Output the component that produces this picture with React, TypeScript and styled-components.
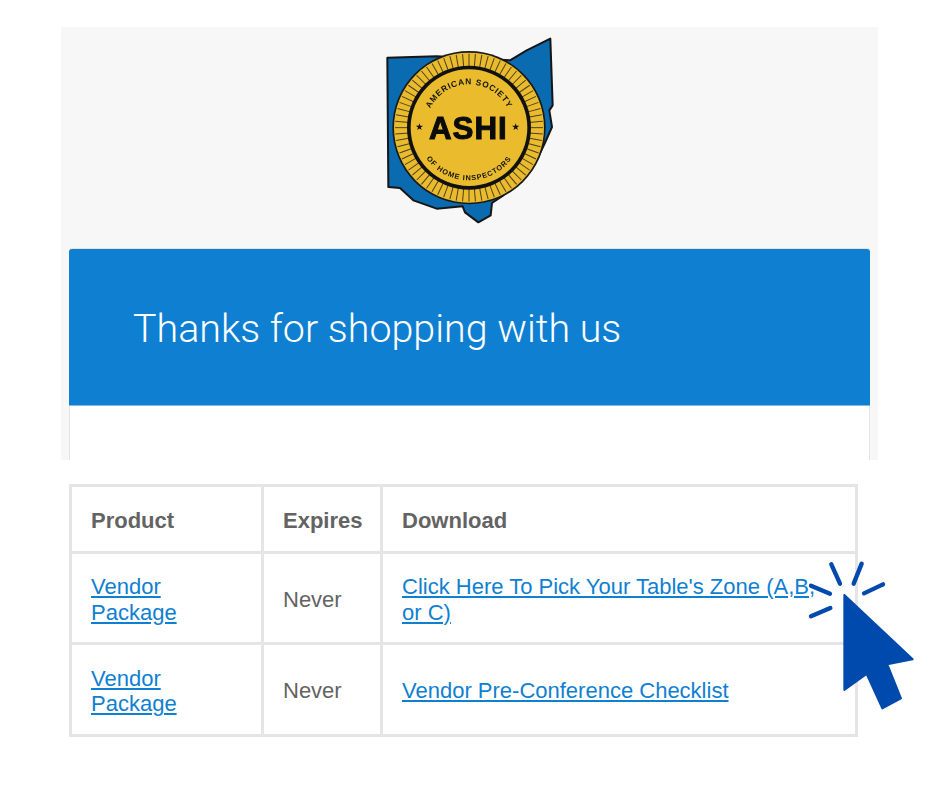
import React from "react";
import styled, { createGlobalStyle } from "styled-components";

const Global = createGlobalStyle`
  html, body { margin: 0; padding: 0; background: #fff; }
  body { font-family: "Liberation Sans", Arial, sans-serif; }
`;

const Page = styled.div`
  position: relative;
  width: 940px;
  height: 788px;
  padding-top: 27px;
  box-sizing: border-box;
  overflow: hidden;
`;

const TopPanel = styled.section`
  width: 817px;
  height: 433px;
  margin-left: 61px;
  padding: 0 8px;
  box-sizing: border-box;
  background: #f7f7f7;
  display: flex;
  flex-direction: column;
`;

const LogoRow = styled.div`
  height: 222px;
  display: flex;
  justify-content: center;
  align-items: flex-start;
`;

const LogoArt = styled.svg`
  filter: blur(0.45px);
`;

const Card = styled.div`
  flex: 1;
  background: #fff;
  border-radius: 3px 3px 0 0;
  border: solid #e4e4e4;
  border-width: 0 1px;
  box-shadow: 0 -1px 0 #e2e2e2;
  display: flex;
  flex-direction: column;
`;

const Banner = styled.div`
  height: 157px;
  margin: 0 -1px;
  background: #0f7fd2;
  border-radius: 3px 3px 0 0;
  border-bottom: 1px solid #7dbbe8;
  box-sizing: border-box;
  display: flex;
  align-items: center;
  padding: 4px 0 0 64px;
`;

const Title = styled.h1`
  margin: 0;
  font-family: Roboto, "Liberation Sans", sans-serif;
  font-weight: 300;
  font-size: 39.4px;
  line-height: 46px;
  color: #fff;
`;

const OrderTable = styled.table`
  margin: 24px 0 0 69px;
  width: 789px;
  table-layout: fixed;
  border-collapse: collapse;
  font-size: 22px;
  line-height: 25.5px;
  color: #636363;
`;

const HeadCell = styled.th`
  border: 3px solid #e5e5e5;
  padding: 3px 19px 0;
  height: 61px;
  text-align: left;
  font-weight: 700;
`;

const Cell = styled.td`
  border: 3px solid #e5e5e5;
  padding: 3px 19px 0;
  height: ${(p: { $h: number }) => p.$h}px;
  text-align: left;
  vertical-align: middle;
`;

const ProductLink = styled.a`
  color: #0f7fd2;
  text-decoration: underline;
`;

const Pointer = styled.svg`
  position: absolute;
  left: 790px;
  top: 550px;
`;

const ticks = Array.from({ length: 72 }, (_, i) => (i * 360) / 72);

const Logo = () => (
  <LogoArt width="200" height="205" viewBox="0 0 600 615" role="img" aria-label="ASHI Ohio logo">
    <defs>
      <path id="topArc" d="M 167 302 A 130 130 0 0 1 427 302" />
      <path id="bottomArc" d="M 139 302 A 158 158 0 0 0 455 302" />
    </defs>
    <path
      d="M52 92 L200 88 L420 100 L470 70 L541 35 L548 235 L538 250 L546 300 L526 345 L500 400 L400 505 L366 528 L362 565 L325 586 L285 556 L278 538 L200 545 L130 520 L90 483 L55 480 Z"
      fill="#0a6bb0"
      stroke="#161616"
      strokeWidth="6"
      strokeLinejoin="round"
    />
    <circle cx="297" cy="302" r="230" fill="#1a1a1a" />
    <circle cx="297" cy="302" r="225" fill="#e9bb2d" />
    {ticks.map((a) => (
      <line
        key={a}
        x1="297"
        y1="80"
        x2="297"
        y2="122"
        stroke="#4a4020"
        strokeWidth="3"
        transform={`rotate(${a} 297 302)`}
      />
    ))}
    <circle cx="297" cy="302" r="186" fill="#111" />
    <circle cx="297" cy="302" r="175" fill="#e9bb2d" />
    <text fontFamily="'Liberation Sans', sans-serif" fontWeight="700" fontSize="25" letterSpacing="2.4" fill="#111">
      <textPath href="#topArc" startOffset="50%" textAnchor="middle">AMERICAN SOCIETY</textPath>
    </text>
    <text fontFamily="'Liberation Sans', sans-serif" fontWeight="700" fontSize="22" letterSpacing="2.6" fill="#111">
      <textPath href="#bottomArc" startOffset="50%" textAnchor="middle">OF HOME INSPECTORS</textPath>
    </text>
    <text x="295" y="335" textAnchor="middle" fontFamily="'Liberation Sans', sans-serif" fontWeight="700" fontSize="94" letterSpacing="3" stroke="#0b0b0b" strokeWidth="3" fill="#0b0b0b">ASHI</text>
    <text x="148" y="310" textAnchor="middle" fontFamily="'DejaVu Sans', sans-serif" fontSize="28" fill="#111">★</text>
    <text x="437" y="310" textAnchor="middle" fontFamily="'DejaVu Sans', sans-serif" fontSize="28" fill="#111">★</text>
  </LogoArt>
);

const CursorIcon = () => (
  <Pointer width="140" height="170" viewBox="0 0 420 510" aria-hidden="true">
    <path
      d="M163 135 L368 328 L292 343 L333 445 L277 475 L230 372 L163 420 Z"
      fill="#0049ad"
      stroke="#0049ad"
      strokeWidth="6"
      strokeLinejoin="round"
    />
    <g stroke="#0049ad" strokeWidth="13" strokeLinecap="round">
      <line x1="124" y1="43" x2="150" y2="101" />
      <line x1="215" y1="41" x2="191" y2="101" />
      <line x1="279" y1="103" x2="222" y2="130" />
      <line x1="63" y1="107" x2="120" y2="131" />
      <line x1="121" y1="174" x2="63" y2="199" />
    </g>
  </Pointer>
);

const rows = [
  { h: 91, download: "Click Here To Pick Your Table's Zone (A,B, or C)" },
  { h: 92, download: "Vendor Pre-Conference Checklist" },
];

export default function App() {
  return (
    <Page>
      <Global />
      <TopPanel>
        <LogoRow>
          <Logo />
        </LogoRow>
        <Card>
          <Banner>
            <Title>Thanks for shopping with us</Title>
          </Banner>
        </Card>
      </TopPanel>
      <OrderTable>
        <colgroup>
          <col style={{ width: 192 }} />
          <col style={{ width: 119 }} />
          <col style={{ width: 475 }} />
        </colgroup>
        <thead>
          <tr>
            <HeadCell>Product</HeadCell>
            <HeadCell>Expires</HeadCell>
            <HeadCell>Download</HeadCell>
          </tr>
        </thead>
        <tbody>
          {rows.map((r) => (
            <tr key={r.download}>
              <Cell $h={r.h - 6}>
                <ProductLink href="#">Vendor Package</ProductLink>
              </Cell>
              <Cell $h={r.h - 6}>Never</Cell>
              <Cell $h={r.h - 6}>
                <ProductLink href="#">{r.download}</ProductLink>
              </Cell>
            </tr>
          ))}
        </tbody>
      </OrderTable>
      <CursorIcon />
    </Page>
  );
}
